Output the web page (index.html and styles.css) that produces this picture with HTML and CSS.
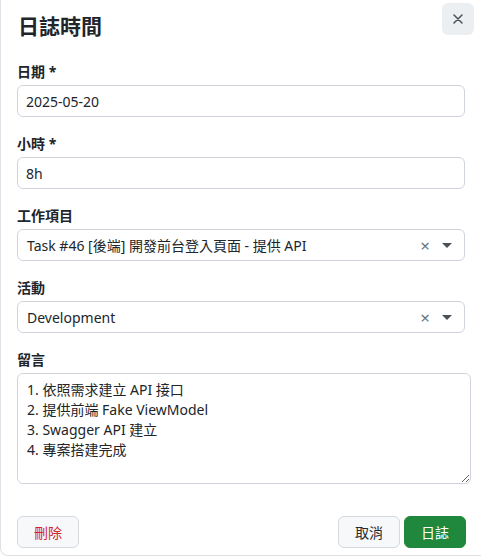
FILE: index.html
```html
<!DOCTYPE html>
<html lang="zh-Hant">
<head>
    <meta charset="UTF-8">
    <meta name="viewport" content="width=device-width, initial-scale=1.0">
    <title>日誌時間</title>
    <link rel="stylesheet" href="styles.css">
</head>
<body>
<div class="modal">
    <div class="modal-header">
        <h1 class="modal-title">日誌時間</h1>
        <button class="close-btn" aria-label="Close">
            <svg width="10" height="10" viewBox="0 0 10 10"><path d="M1 1L9 9M9 1L1 9" stroke="#495057" stroke-width="1.5" stroke-linecap="round"/></svg>
        </button>
    </div>

    <div class="form-group">
        <label for="date">日期 *</label>
        <input type="text" id="date" class="form-control" value="2025-05-20">
    </div>

    <div class="form-group">
        <label for="hours">小時 *</label>
        <input type="text" id="hours" class="form-control" value="8h">
    </div>

    <div class="form-group">
        <label>工作項目</label>
        <div class="select-box">
            <span class="select-value">Task #46 [後端] 開發前台登入頁面 - 提供 API</span>
            <span class="select-clear">&times;</span>
            <span class="select-caret"></span>
        </div>
    </div>

    <div class="form-group">
        <label>活動</label>
        <div class="select-box">
            <span class="select-value">Development</span>
            <span class="select-clear">&times;</span>
            <span class="select-caret"></span>
        </div>
    </div>

    <div class="form-group">
        <label for="comment">留言</label>
        <textarea id="comment" class="form-control comment">1. 依照需求建立 API 接口
2. 提供前端 Fake ViewModel
3. Swagger API 建立
4. 專案搭建完成</textarea>
    </div>

    <div class="modal-footer">
        <button class="btn btn-delete">刪除</button>
        <div class="footer-right">
            <button class="btn btn-cancel">取消</button>
            <button class="btn btn-save">日誌</button>
        </div>
    </div>
</div>
</body>
</html>
```

FILE: styles.css
```css
html, body {
    margin: 0;
    padding: 0;
    overflow: hidden;
    background: #fff;
}
body {
    font-family: "Noto Sans", "Noto Sans CJK TC", sans-serif;
    font-size: 14px;
    color: #212529;
}
.modal {
    width: 500px;
    height: 556px;
    box-sizing: border-box;
    border: 1px solid #dee2e6;
    border-top: none;
    border-radius: 0 0 8px 8px;
    padding: 0 16px;
}
.modal-header {
    display: flex;
    justify-content: space-between;
    align-items: flex-start;
    width: 448px;
    padding-top: 3px;
    height: 58px;
}
.modal-title {
    margin: 8px 0 0 1px;
    font-size: 21px;
    font-weight: 700;
    line-height: 30px;
}
.close-btn {
    width: 32px;
    height: 32px;
    margin-right: -9px;
    border: none;
    border-radius: 6px;
    background: #eceff2;
    display: flex;
    align-items: center;
    justify-content: center;
    padding: 0;
    cursor: pointer;
}
.form-group {
    margin-bottom: 16px;
}
label {
    display: block;
    font-weight: 700;
    line-height: 21px;
    margin-bottom: 3px;
}
.form-control {
    display: block;
    width: 448px;
    height: 32px;
    box-sizing: border-box;
    padding: 5px 8px;
    border: 1px solid #ced4da;
    border-radius: 6px;
    font-family: inherit;
    font-size: 14px;
    color: #212529;
    background: #fff;
}
.select-box {
    display: flex;
    align-items: center;
    width: 448px;
    height: 32px;
    box-sizing: border-box;
    padding: 0 10px 0 9px;
    border: 1px solid #ced4da;
    border-radius: 6px;
}
.select-value {
    flex: 1;
}
.select-clear {
    color: #6c757d;
    font-size: 17px;
    line-height: 1;
    margin-right: 12px;
}
.select-caret {
    width: 0;
    height: 0;
    border-left: 5px solid transparent;
    border-right: 5px solid transparent;
    border-top: 5px solid #495057;
    margin-right: 2px;
}
.comment {
    width: 454px;
    height: 111px;
    padding: 6px 9px;
    line-height: 20px;
    resize: vertical;
}
.modal-footer {
    display: flex;
    justify-content: space-between;
    width: 449px;
    margin-top: 32px;
}
.footer-right {
    display: flex;
    gap: 4px;
}
.btn {
    height: 32px;
    padding: 0 16px;
    border-radius: 6px;
    font-family: inherit;
    font-size: 14px;
    cursor: pointer;
}
.btn-delete {
    background: #f6f8fa;
    border: 1px solid #d5d9de;
    color: #d1242f;
}
.btn-cancel {
    background: #f6f8fa;
    border: 1px solid #d5d9de;
    color: #24292f;
}
.btn-save {
    background: #1f883d;
    border: 1px solid #1f883d;
    color: #fff;
}
```
